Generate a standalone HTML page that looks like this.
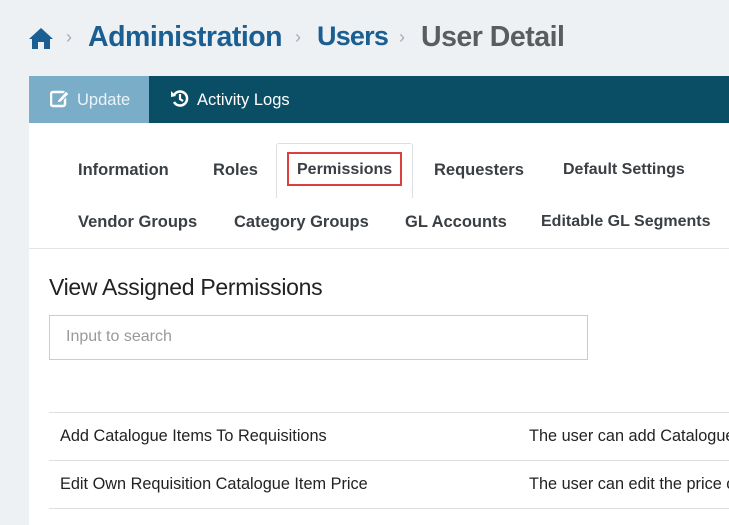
<!DOCTYPE html>
<html><head><meta charset="utf-8"><style>
*{margin:0;padding:0;box-sizing:border-box}
body{width:729px;height:525px;overflow:hidden;background:#eef1f3;font-family:"Liberation Sans",sans-serif;position:relative}
.a{position:absolute;white-space:nowrap}
.bc{font-weight:bold;font-size:28.5px;top:21px;letter-spacing:-0.5px}
.chev{color:#aab;font-size:18px;top:27px}
.tab{font-weight:bold;font-size:16.5px;color:#3a3f44}
.row{font-size:16.3px;color:#222}
</style></head><body>
<svg class="a" style="left:28px;top:27px" width="26" height="22" viewBox="0 0 26 22"><path d="M13 1 L1 12 L4 12 L4 22 L10 22 L10 15 L16 15 L16 22 L22 22 L22 12 L25 12 Z" fill="#1a5e92"/></svg>
<div class="a chev" style="left:66px">›</div>
<div class="a bc" style="left:88px;color:#1a5e92">Administration</div>
<div class="a chev" style="left:295px">›</div>
<div class="a bc" style="left:317px;color:#1a5e92;font-size:27px;letter-spacing:-0.8px">Users</div>
<div class="a chev" style="left:399px">›</div>
<div class="a bc" style="left:421px;color:#5a5d60">User Detail</div>

<div class="a" style="left:29px;top:76px;width:700px;height:47px;background:#0a4e66"></div>
<div class="a" style="left:29px;top:76px;width:120px;height:47px;background:#7aaec8"></div>
<svg class="a" style="left:50px;top:89px" width="20" height="19" viewBox="0 0 20 19"><rect x="1" y="3" width="14" height="14" rx="2" fill="none" stroke="#fff" stroke-width="2.5"/><path d="M8 11 L16 2 L19 5 L11 13 L7 14 Z" fill="#fff" stroke="#7aaec8" stroke-width="1"/></svg>
<div class="a" style="left:77px;top:91px;font-size:16.5px;color:#eaf3f8">Update</div>
<svg class="a" style="left:170px;top:89px" width="20" height="19" viewBox="0 0 20 19"><path d="M4 6 A7 7 0 1 1 4 13" fill="none" stroke="#fff" stroke-width="2.5"/><path d="M1 2 L6 7 L1 8 Z" fill="#fff"/><path d="M10 5 L10 10 L13 12" fill="none" stroke="#fff" stroke-width="2.2"/></svg>
<div class="a" style="left:197px;top:91px;font-size:16.5px;color:#fff">Activity Logs</div>

<div class="a" style="left:29px;top:123px;width:700px;height:402px;background:#fff"></div>
<div class="a" style="left:29px;top:248px;width:700px;height:1px;background:#e2e4e6"></div>
<div class="a" style="left:276px;top:143px;width:137px;height:55px;border:1px solid #dcdfe2;border-bottom:none;border-radius:3px 3px 0 0;background:#fff"></div>
<div class="a" style="left:287px;top:152px;width:115px;height:34px;border:2px solid #d9403f"></div>
<div class="a tab" style="left:78px;top:161px">Information</div>
<div class="a tab" style="left:213px;top:161px">Roles</div>
<div class="a tab" style="left:297px;top:161px;font-size:16px">Permissions</div>
<div class="a tab" style="left:434px;top:161px">Requesters</div>
<div class="a tab" style="left:563px;top:161px;font-size:16px">Default Settings</div>
<div class="a tab" style="left:78px;top:213px">Vendor Groups</div>
<div class="a tab" style="left:234px;top:213px">Category Groups</div>
<div class="a tab" style="left:405px;top:213px">GL Accounts</div>
<div class="a tab" style="left:541px;top:213px;font-size:16px">Editable GL Segments</div>

<div class="a" style="left:49px;top:274px;font-size:23px;color:#222;letter-spacing:-0.3px">View Assigned Permissions</div>
<div class="a" style="left:49px;top:315px;width:539px;height:45px;border:1px solid #c9ccd0"></div>
<div class="a" style="left:66px;top:328px;font-size:16px;color:#999">Input to search</div>

<div class="a" style="left:49px;top:412px;width:680px;height:1px;background:#dde0e3"></div>
<div class="a" style="left:49px;top:460px;width:680px;height:1px;background:#dde0e3"></div>
<div class="a" style="left:49px;top:508px;width:680px;height:1px;background:#dde0e3"></div>
<div class="a row" style="left:60px;top:427px">Add Catalogue Items To Requisitions</div>
<div class="a row" style="left:529px;top:427px">The user can add Catalogue</div>
<div class="a row" style="left:60px;top:475px">Edit Own Requisition Catalogue Item Price</div>
<div class="a row" style="left:529px;top:475px">The user can edit the price o</div>
</body></html>
